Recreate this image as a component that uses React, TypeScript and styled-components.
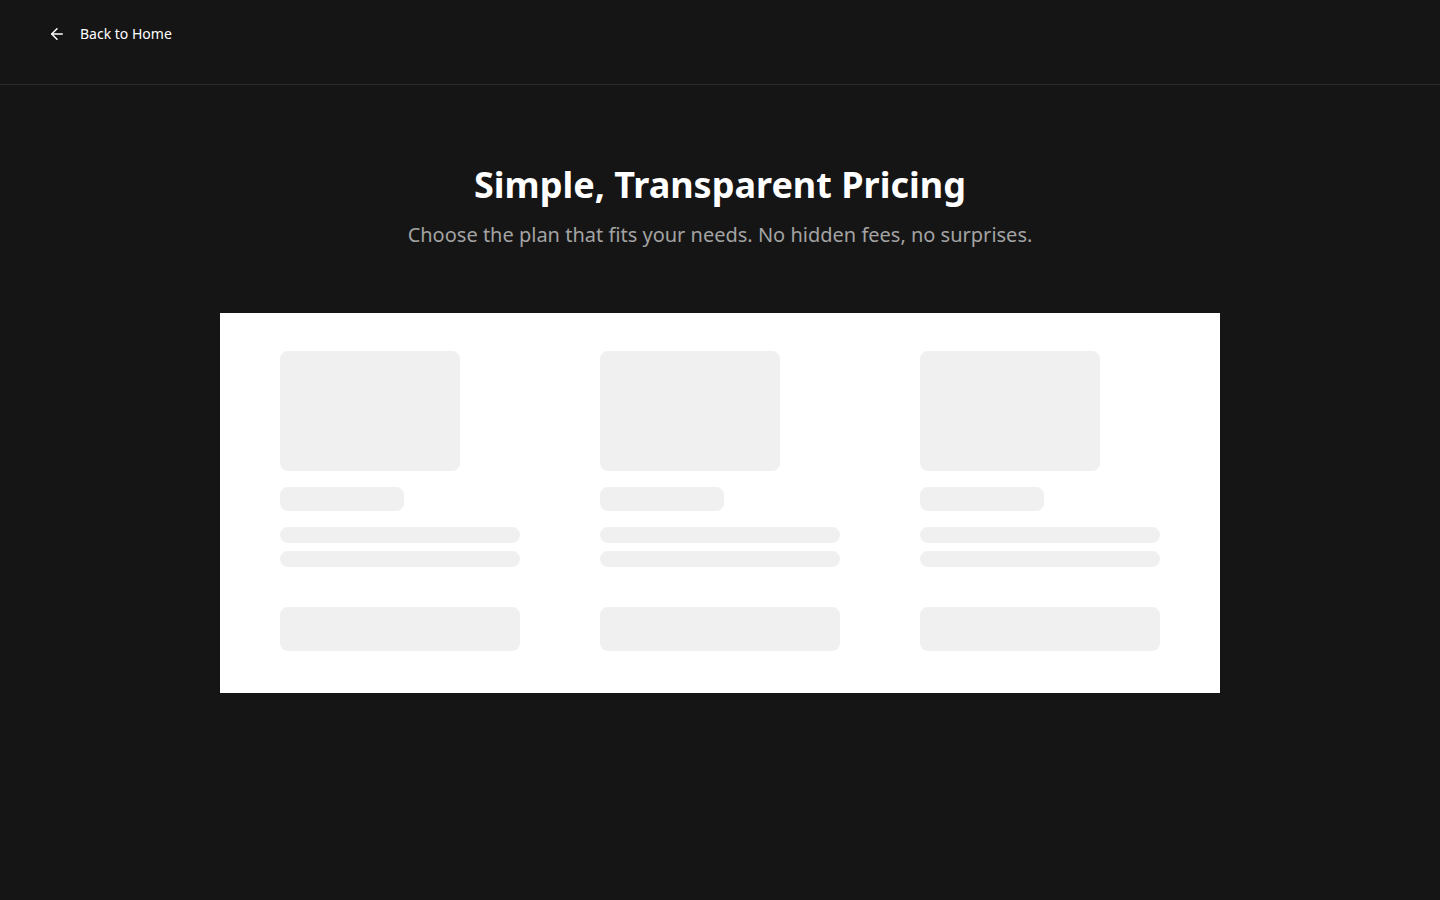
import React from 'react';
import styled, { createGlobalStyle } from 'styled-components';
import { ArrowLeft } from 'lucide-react';

const GlobalStyle = createGlobalStyle`
	html, body {
		margin: 0;
		padding: 0;
		background: #151515;
		font-family: 'Noto Sans', 'Open Sans', sans-serif;
		color: #ffffff;
	}
	* {
		box-sizing: border-box;
	}
`;

const Page = styled.div`
	min-height: 100vh;
	display: flex;
	flex-direction: column;
	background: #151515;
`;

const Header = styled.header`
	height: 85px;
	display: flex;
	align-items: center;
	padding: 0 40px;
	border-bottom: 1px solid #2b2b2b;
`;

const BackLink = styled.a`
	display: flex;
	align-items: center;
	gap: 14px;
	padding: 8px;
	color: #ffffff;
	font-size: 14px;
	text-decoration: none;
	cursor: pointer;
	margin-top: -17px;
`;

const Main = styled.main`
	display: flex;
	flex-direction: column;
	align-items: center;
	padding: 78px 0 0;
`;

const Title = styled.h1`
	margin: 0;
	font-size: 36px;
	line-height: 44px;
	font-weight: 700;
	color: #ffffff;
`;

const Subtitle = styled.p`
	margin: 14px 0 0;
	font-size: 20px;
	line-height: 28px;
	color: #a3a3a3;
`;

const Card = styled.section`
	margin-top: 64px;
	width: 1000px;
	background: #ffffff;
	padding: 38px 60px 42px;
	display: grid;
	grid-template-columns: repeat(3, 240px);
	column-gap: 80px;
`;

const Column = styled.div`
	display: flex;
	flex-direction: column;
`;

const Bone = styled.div<{ $w: number; $h: number; $mt?: number }>`
	width: ${p => p.$w}px;
	height: ${p => p.$h}px;
	margin-top: ${p => p.$mt ?? 0}px;
	background: #f0f0f0;
	border-radius: 8px;
`;

function SkeletonPlan() {
	return (
		<Column>
			<Bone $w={180} $h={120} />
			<Bone $w={124} $h={24} $mt={16} />
			<Bone $w={240} $h={16} $mt={16} />
			<Bone $w={240} $h={16} $mt={8} />
			<Bone $w={240} $h={44} $mt={40} />
		</Column>
	);
}

export default function App() {
	return (
		<Page>
			<GlobalStyle />
			<Header>
				<BackLink>
					<ArrowLeft size={18} strokeWidth={2} />
					Back to Home
				</BackLink>
			</Header>
			<Main>
				<Title>Simple, Transparent Pricing</Title>
				<Subtitle>Choose the plan that fits your needs. No hidden fees, no surprises.</Subtitle>
				<Card>
					<SkeletonPlan />
					<SkeletonPlan />
					<SkeletonPlan />
				</Card>
			</Main>
		</Page>
	);
}
